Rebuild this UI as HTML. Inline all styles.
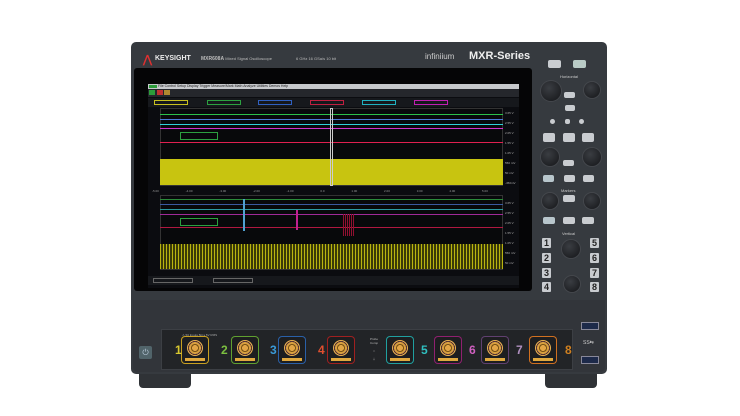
<!DOCTYPE html>
<html><head><meta charset="utf-8"><style>
*{margin:0;padding:0;box-sizing:border-box}
body{width:740px;height:416px;background:#fff;position:relative;overflow:hidden;font-family:"Liberation Sans",sans-serif}
.a{position:absolute}
.btn{position:absolute;background:#c9ccd0;border-radius:2px;width:13px;height:8px}
.knob{position:absolute;border-radius:50%;background:radial-gradient(circle at 40% 35%,#3a3d42,#141518);width:20px;height:20px;box-shadow:0 0 0 1px #44474c}
.num{position:absolute;width:9px;height:10px;background:#c8cbcf;color:#222;font-size:9px;font-weight:bold;text-align:center;line-height:10px;border-radius:1px}
.bnc{position:absolute;top:337px;width:26px;height:26px;border-radius:3px;background:#1d1e20}
.bnc i{position:absolute;left:5px;top:3px;width:16px;height:16px;border-radius:50%;background:radial-gradient(circle,#e2a545 0 3px,#7a5416 3px 4px,#d9a040 4px 6px,#533 6px 7px,#e8b050 7px)}
.bnc b{position:absolute;left:3px;bottom:2px;width:20px;height:3px;background:#e0a93f}
.cn{position:absolute;top:343px;font-size:12px;font-weight:bold}
.lab{position:absolute;font-size:3px;color:#aaa}
</style></head><body>
<!-- feet -->
<div class="a" style="left:139px;top:366px;width:52px;height:22px;background:#2f3236;border-radius:0 0 4px 4px"></div>
<div class="a" style="left:545px;top:366px;width:52px;height:22px;background:#2f3236;border-radius:0 0 4px 4px"></div>
<!-- body -->
<div class="a" style="left:131px;top:42px;width:476px;height:332px;background:#363a3f;border-radius:5px"></div>
<div class="a" style="left:133px;top:300px;width:472px;height:72px;background:#32353a;border-radius:0 0 5px 5px"></div>
<!-- top bar -->
<div class="a" style="left:143px;top:53px;color:#e03030;font-size:11px;font-weight:bold">⋀</div>
<div class="a" style="left:155px;top:55px;color:#eee;font-size:7px;font-weight:bold">KEYSIGHT</div>
<div class="a" style="left:201px;top:56px;color:#bbb;font-size:5px;font-weight:bold">MXR608A <span style="font-weight:normal;font-size:4px">Mixed Signal Oscilloscope</span></div>
<div class="a" style="left:296px;top:56px;color:#bbb;font-size:4px">6 GHz 16 GSa/s 10 bit</div>
<div class="a" style="left:425px;top:52px;color:#ccc;font-size:8px">infiniium</div>
<div class="a" style="left:469px;top:50px;color:#eee;font-size:11px;font-weight:bold">MXR-Series</div>
<!-- screen bezel -->
<div class="a" style="left:134px;top:68px;width:398px;height:223px;background:#050506;border-radius:3px"></div>
<div class="a" style="left:148px;top:84px;width:371px;height:204px;background:#0b0c10"></div>
<!-- menu/tool bars -->
<div class="a" style="left:148px;top:84px;width:371px;height:5px;background:#c7c9cc"></div>
<div class="a" style="left:149px;top:85px;width:8px;height:3px;background:#2c9c3a"></div>
<div class="a" style="left:158px;top:84px;font-size:3.5px;color:#222;line-height:5px">File Control Setup Display Trigger Measure/Mark Math Analyze Utilities Demos Help</div>
<div class="a" style="left:148px;top:89px;width:371px;height:8px;background:#25272c"></div>
<div class="a" style="left:149px;top:90px;width:6px;height:5px;background:#2c9c3a"></div>
<div class="a" style="left:157px;top:90px;width:6px;height:5px;background:#c03030"></div>
<div class="a" style="left:164px;top:90px;width:6px;height:5px;background:#b08830"></div>
<div class="a" style="left:148px;top:98px;width:371px;height:9px;background:#16181c"></div>
<div class="a" style="left:154px;top:100px;width:34px;height:5px;border:1px solid #c8c020"></div>
<div class="a" style="left:207px;top:100px;width:34px;height:5px;border:1px solid #2ca040"></div>
<div class="a" style="left:258px;top:100px;width:34px;height:5px;border:1px solid #3060c0"></div>
<div class="a" style="left:310px;top:100px;width:34px;height:5px;border:1px solid #c02040"></div>
<div class="a" style="left:362px;top:100px;width:34px;height:5px;border:1px solid #20b0c0"></div>
<div class="a" style="left:414px;top:100px;width:34px;height:5px;border:1px solid #c020b0"></div>
<!-- upper graph -->
<div class="a" style="left:160px;top:108px;width:343px;height:78px;background:#08090b;border:1px solid #333"></div>
<div class="a" style="left:160px;top:114px;width:343px;height:1px;background:#2cc04a"></div>
<div class="a" style="left:160px;top:119px;width:343px;height:1px;background:#4a78d8"></div>
<div class="a" style="left:160px;top:124px;width:343px;height:1px;background:#30d0d8"></div>
<div class="a" style="left:160px;top:128px;width:343px;height:1px;background:#d030c8"></div>
<div class="a" style="left:160px;top:142px;width:343px;height:1px;background:#e02050"></div>
<div class="a" style="left:160px;top:159px;width:343px;height:26px;background:#c8c410"></div>
<div class="a" style="left:330px;top:108px;width:3px;height:78px;border:1px solid #ccc"></div>
<div class="a" style="left:180px;top:132px;width:38px;height:8px;border:1px solid #2ca040"></div>
<!-- axis labels -->
<div class="a" style="left:152px;top:189px;width:355px;font-size:3px;color:#999;word-spacing:26px">-5.00 -4.00 -3.00 -2.00 -1.00 0.0 1.00 2.00 3.00 4.00 5.00</div>
<!-- lower graph -->
<div class="a" style="left:160px;top:195px;width:343px;height:75px;background:#08090b;border:1px solid #333"></div>
<div class="a" style="left:160px;top:199px;width:343px;height:1px;background:#2a8a3a"></div>
<div class="a" style="left:160px;top:204px;width:343px;height:1px;background:#3a5aa0"></div>
<div class="a" style="left:160px;top:209px;width:343px;height:1px;background:#2a9aa0"></div>
<div class="a" style="left:160px;top:214px;width:343px;height:1px;background:#a02a98"></div>
<div class="a" style="left:160px;top:227px;width:343px;height:1px;background:#b01840"></div>
<div class="a" style="left:243px;top:199px;width:2px;height:32px;background:#50a0d0"></div>
<div class="a" style="left:296px;top:210px;width:2px;height:20px;background:#c02090"></div>
<div class="a" style="left:343px;top:214px;width:12px;height:22px;background:repeating-linear-gradient(90deg,#901030 0 1px,transparent 1px 2px)"></div>
<div class="a" style="left:180px;top:218px;width:38px;height:8px;border:1px solid #2ca040"></div>
<div class="a" style="left:160px;top:244px;width:343px;height:25px;background:repeating-linear-gradient(90deg,#b8b410 0 1px,#3a3a08 1px 3px)"></div>
<!-- right labels -->
<div class="a" style="left:505px;top:108px;width:14px;height:160px;font-size:3px;color:#aaa;line-height:10px">3.65 V<br>2.55 V<br>2.05 V<br>1.55 V<br>1.05 V<br>550 mV<br>50 mV<br>-450mV<br><br>3.65 V<br>2.55 V<br>2.05 V<br>1.55 V<br>1.05 V<br>550 mV<br>50 mV</div>
<!-- bottom bar -->
<div class="a" style="left:148px;top:276px;width:371px;height:9px;background:#16181c"></div>
<div class="a" style="left:153px;top:278px;width:40px;height:5px;border:1px solid #666"></div>
<div class="a" style="left:213px;top:278px;width:40px;height:5px;border:1px solid #666"></div>
<!-- right panel -->
<div class="btn" style="left:548px;top:60px;height:8px"></div>
<div class="btn" style="left:573px;top:60px;height:8px;background:#b9cbc6"></div>
<div class="a" style="left:560px;top:74px;font-size:4px;color:#ccc">Horizontal</div>
<div class="knob" style="left:541px;top:81px"></div>
<div class="knob" style="left:584px;top:82px;width:16px;height:16px"></div>
<div class="btn" style="left:564px;top:92px;width:11px;height:6px"></div>
<div class="btn" style="left:565px;top:105px;width:10px;height:6px"></div>
<div class="btn" style="left:550px;top:119px;width:5px;height:5px;border-radius:50%"></div>
<div class="btn" style="left:565px;top:119px;width:5px;height:5px"></div>
<div class="btn" style="left:579px;top:119px;width:5px;height:5px;border-radius:50%"></div>
<div class="btn" style="left:543px;top:133px;width:12px;height:9px"></div>
<div class="btn" style="left:563px;top:133px;width:12px;height:9px"></div>
<div class="btn" style="left:582px;top:133px;width:12px;height:9px"></div>
<div class="knob" style="left:541px;top:148px;width:18px;height:18px"></div>
<div class="knob" style="left:583px;top:148px;width:18px;height:18px"></div>
<div class="btn" style="left:563px;top:160px;width:11px;height:6px"></div>
<div class="btn" style="left:543px;top:175px;width:11px;height:7px;background:#b8c6cc"></div>
<div class="btn" style="left:564px;top:175px;width:11px;height:7px"></div>
<div class="btn" style="left:583px;top:175px;width:11px;height:7px"></div>
<div class="a" style="left:561px;top:188px;font-size:4px;color:#ccc">Markers</div>
<div class="knob" style="left:542px;top:193px;width:16px;height:16px"></div>
<div class="knob" style="left:584px;top:193px;width:16px;height:16px"></div>
<div class="btn" style="left:563px;top:195px;width:12px;height:7px"></div>
<div class="btn" style="left:543px;top:217px;width:12px;height:7px;background:#b8c6cc"></div>
<div class="btn" style="left:563px;top:217px;width:12px;height:7px"></div>
<div class="btn" style="left:582px;top:217px;width:12px;height:7px"></div>
<div class="a" style="left:562px;top:231px;font-size:4px;color:#ccc">Vertical</div>
<div class="num" style="left:542px;top:238px">1</div><div class="num" style="left:590px;top:238px">5</div>
<div class="num" style="left:542px;top:253px">2</div><div class="num" style="left:590px;top:253px">6</div>
<div class="num" style="left:542px;top:268px">3</div><div class="num" style="left:590px;top:268px">7</div>
<div class="num" style="left:542px;top:282px">4</div><div class="num" style="left:590px;top:282px">8</div>
<div class="knob" style="left:562px;top:240px;width:18px;height:18px"></div>
<div class="knob" style="left:564px;top:276px;width:16px;height:16px"></div>
<!-- USB -->
<div class="a" style="left:581px;top:322px;width:18px;height:8px;background:#1d2a4a;border:1px solid #889"></div>
<div class="a" style="left:583px;top:340px;font-size:5px;color:#ccc">SS⇆</div>
<div class="a" style="left:581px;top:356px;width:18px;height:8px;background:#1d2a4a;border:1px solid #889"></div>
<!-- power -->
<div class="a" style="left:139px;top:346px;width:13px;height:13px;background:#51646a;border-radius:2px;color:#bcd;font-size:8px;text-align:center;line-height:13px">⏻</div>
<!-- connector strip -->
<div class="a" style="left:161px;top:329px;width:412px;height:41px;background:#222427;border:1px solid #3c3f44"></div>
<div class="lab" style="left:182px;top:333px">⚠ 50 Inputs 5Ω ≤ 5V RMS</div>
<div class="bnc" style="left:182px;box-shadow:0 0 0 1px #c8a020"><i></i><b></b></div><div class="cn" style="left:175px;color:#d8c830">1</div>
<div class="bnc" style="left:232px;box-shadow:0 0 0 1px #60a030"><i></i><b></b></div><div class="cn" style="left:221px;color:#7cc040">2</div>
<div class="bnc" style="left:279px;box-shadow:0 0 0 1px #2a60a8"><i></i><b></b></div><div class="cn" style="left:270px;color:#3a9ad8">3</div>
<div class="bnc" style="left:328px;box-shadow:0 0 0 1px #a02020"><i></i><b></b></div><div class="cn" style="left:318px;color:#e05030">4</div>
<div class="a" style="left:367px;top:337px;font-size:3px;color:#bbb;text-align:center;width:14px">Probe Comp<br><br>⎍<br><br>⏚</div>
<div class="bnc" style="left:387px;box-shadow:0 0 0 1px #20a0a0"><i></i><b></b></div><div class="cn" style="left:421px;color:#30c0c0">5</div>
<div class="bnc" style="left:435px;box-shadow:0 0 0 1px #902070"><i></i><b></b></div><div class="cn" style="left:469px;color:#d060c0">6</div>
<div class="bnc" style="left:482px;box-shadow:0 0 0 1px #604070"><i></i><b></b></div><div class="cn" style="left:516px;color:#b090c0">7</div>
<div class="bnc" style="left:530px;box-shadow:0 0 0 1px #d07020"><i></i><b></b></div><div class="cn" style="left:565px;color:#d08020">8</div>
</body></html>
